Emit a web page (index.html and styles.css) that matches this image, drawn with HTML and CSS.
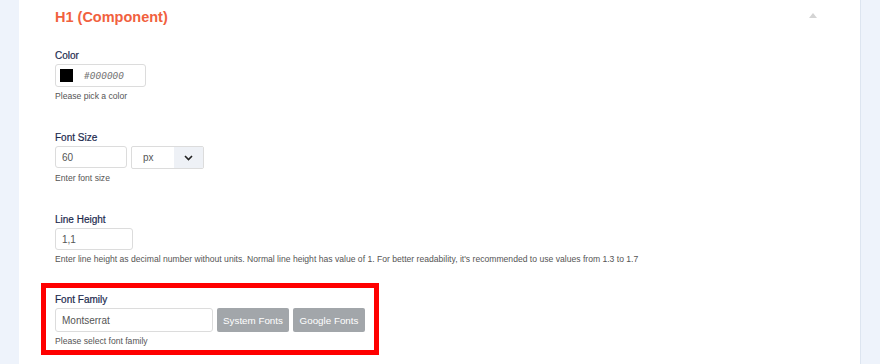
FILE: index.html
```html
<!DOCTYPE html>
<html lang="en">
<head>
    <meta charset="UTF-8">
    <title>H1 (Component)</title>
    <link rel="stylesheet" href="styles.css">
</head>
<body>
    <div class="page">
        <div class="panel">
            <div class="panel-head">
                <h2 class="panel-title">H1 (Component)</h2>
                <span class="collapse-arrow"></span>
            </div>

            <div class="field">
                <label class="field-label">Color</label>
                <div class="color-input">
                    <span class="swatch"></span>
                    <span class="color-value">#000000</span>
                </div>
                <p class="help">Please pick a color</p>
            </div>

            <div class="field">
                <label class="field-label">Font Size</label>
                <div class="row">
                    <input type="text" class="text-input size-input" value="60">
                    <div class="select">
                        <span class="select-value">px</span>
                        <span class="select-arrow">
                            <svg width="9" height="6" viewBox="0 0 9 6"><path d="M1 1 L4.5 4.5 L8 1" fill="none" stroke="#222" stroke-width="1.6"/></svg>
                        </span>
                    </div>
                </div>
                <p class="help">Enter font size</p>
            </div>

            <div class="field tight">
                <label class="field-label">Line Height</label>
                <input type="text" class="text-input lh-input" value="1,1">
                <p class="help">Enter line height as decimal number without units. Normal line height has value of 1. For better readability, it's recommended to use values from 1.3 to 1.7</p>
            </div>

            <div class="field highlighted">
                <label class="field-label">Font Family</label>
                <div class="row">
                    <input type="text" class="text-input family-input" value="Montserrat">
                    <button class="btn">System Fonts</button>
                    <button class="btn">Google Fonts</button>
                </div>
                <p class="help">Please select font family</p>
            </div>
        </div>
    </div>
</body>
</html>
```

FILE: styles.css
```css
body {
    margin: 0;
    font-family: "Liberation Sans", Arial, sans-serif;
    background-color: #eef3fb;
}
.page {
    padding: 0 19px 0 19px;
}
.panel {
    background-color: #fff;
    border-right: 1px solid #dde5f0;
    padding: 7px 22px 20px 22px;
    min-height: 400px;
}
.panel-head {
    display: flex;
    justify-content: space-between;
    align-items: center;
    padding-left: 14px;
    padding-right: 21px;
    margin-bottom: 12px;
}
.panel-title {
    margin: 0;
    font-size: 14.5px;
    line-height: 20px;
    font-weight: bold;
    color: #f1613e;
}
.collapse-arrow {
    width: 0;
    height: 0;
    border-left: 4.5px solid transparent;
    border-right: 4.5px solid transparent;
    border-bottom: 5px solid #d4d4d4;
    margin-top: -4px;
}
.field {
    border: 5px solid transparent;
    padding: 5px 9px 3px 9px;
    margin-bottom: 11px;
    width: 310px;
}
.field.tight {
    margin-bottom: 10px;
}
.field.highlighted {
    border-color: #ff0000;
}
.field-label {
    display: block;
    font-size: 10px;
    line-height: 14px;
    color: #1b2a4e;
    margin-bottom: 1px;
    -webkit-text-stroke: 0.2px #1b2a4e;
}
.row {
    display: flex;
    gap: 4px;
}
.text-input {
    box-sizing: border-box;
    height: 22px;
    border: 1px solid #dcdcdc;
    border-radius: 3px;
    padding: 0 6px;
    font-family: "Liberation Sans", Arial, sans-serif;
    font-size: 10px;
    color: #555;
    outline: none;
}
.size-input {
    width: 72px;
}
.lh-input {
    width: 78px;
    display: block;
}
.family-input {
    width: 158px;
    height: 24px;
}
.color-input {
    box-sizing: border-box;
    width: 91px;
    height: 23px;
    border: 1px solid #dcdcdc;
    border-radius: 3px;
    display: flex;
    align-items: center;
    padding-left: 4px;
}
.swatch {
    width: 13px;
    height: 13px;
    background-color: #000;
}
.color-value {
    margin-left: 11px;
    font-family: "DejaVu Sans Mono", monospace;
    font-style: italic;
    font-size: 9.5px;
    color: #777;
}
.select {
    box-sizing: border-box;
    width: 73px;
    height: 23px;
    border: 1px solid #dcdcdc;
    border-radius: 2px;
    display: flex;
    overflow: hidden;
}
.select-value {
    flex: 1;
    padding-left: 11px;
    font-size: 10px;
    line-height: 21px;
    color: #555;
}
.select-arrow {
    width: 29px;
    background-color: #eef1f6;
    display: flex;
    align-items: center;
    justify-content: center;
}
.btn {
    height: 24px;
    width: 72px;
    padding: 0;
    border: none;
    border-radius: 2px;
    background-color: #a2a6aa;
    color: #fff;
    font-family: "Liberation Sans", Arial, sans-serif;
    font-size: 9.8px;
}
.help {
    margin: 3px 0 0 0;
    font-size: 8.6px;
    line-height: 12px;
    color: #555;
    white-space: nowrap;
}
```
